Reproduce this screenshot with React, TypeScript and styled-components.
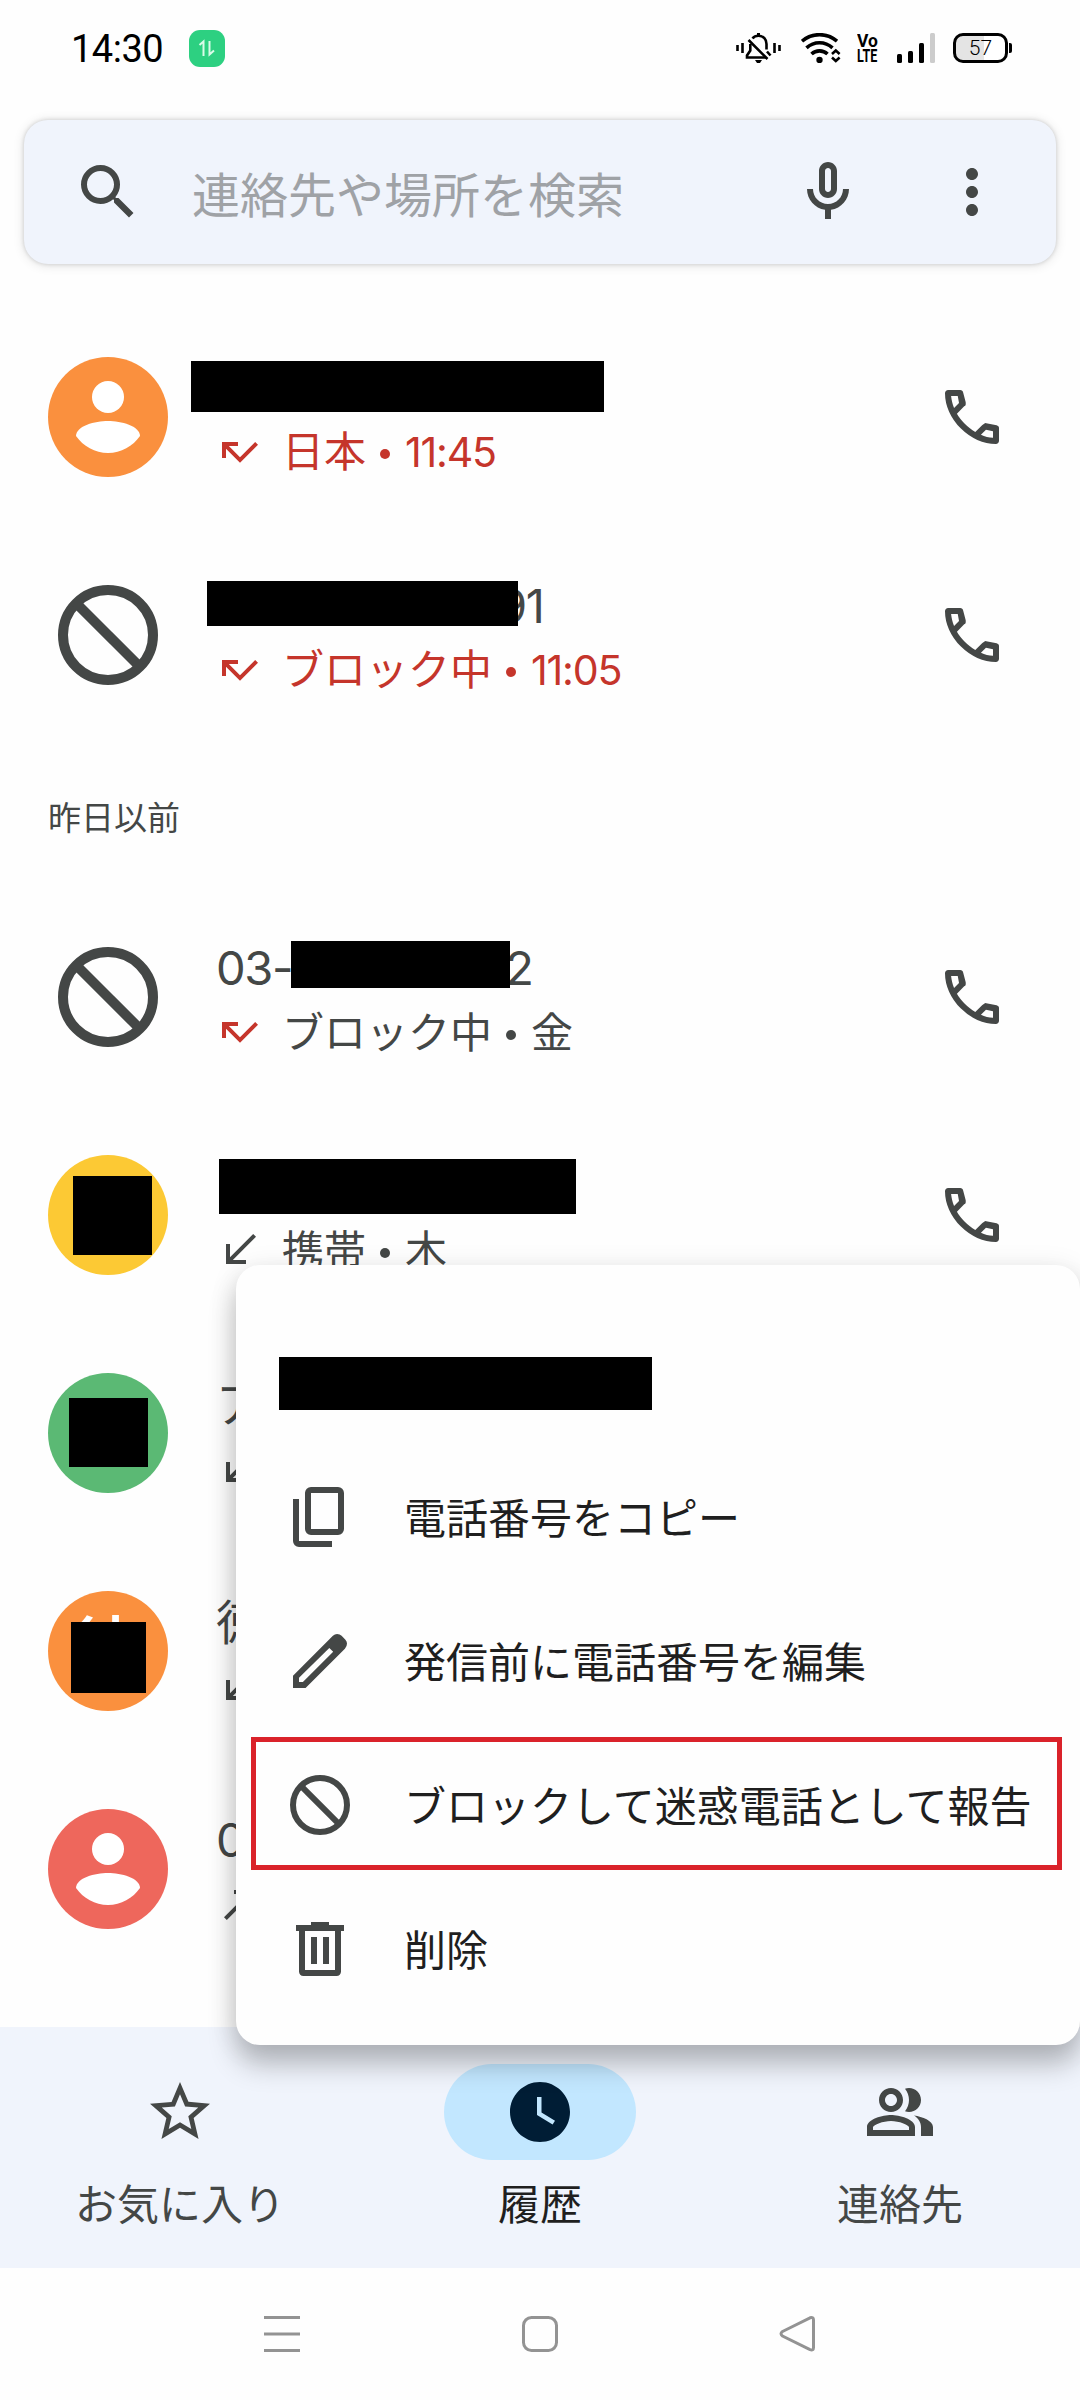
import React from "react";
import styled, { createGlobalStyle } from "styled-components";

const ink = "#444746";
const red = "#c5352b";
const surface = "#f0f4fc";

const GlobalStyle = createGlobalStyle`
  * { box-sizing: border-box; }
  body {
    margin: 0;
    background: #fff;
    color: ${ink};
    font-family: "Noto Sans CJK JP", "Noto Sans", sans-serif;
  }
`;

const Screen = styled.div`
  position: relative;
  display: flex;
  flex-direction: column;
  width: 1080px;
  height: 2400px;
  overflow: hidden;
  background: #fefefe;
`;

/* ---------- status bar ---------- */

const StatusBar = styled.header`
  display: flex;
  align-items: center;
  height: 96px;
  padding: 0 68px 0 71px;
  color: #000;
`;

const Clock = styled.span`
  width: 118px;
  padding-top: 1px;
  font: 400 38px/44px Roboto, sans-serif;
  letter-spacing: -0.5px;
`;

const DataBadge = styled.span`
  display: flex;
  width: 36px;
  height: 37px;
  border-radius: 11px;
  background: #2dd081;
`;

const StatusIcons = styled.div`
  display: flex;
  align-items: center;
  margin-left: auto;
  height: 30px;
`;

const StatusGlyph = styled.svg<{ $gap: number }>`
  display: block;
  flex: none;
  margin-right: ${(p) => p.$gap}px;
`;

const Volte = styled.span`
  display: flex;
  flex-direction: column;
  width: 22px;
  height: 30px;
  margin-right: 18px;
  font: 700 19px/15px Roboto, sans-serif;
`;

const VolteLine = styled.span<{ $stretch: number }>`
  display: block;
  width: max-content;
  height: 15px;
  transform: scaleX(${(p) => p.$stretch});
  transform-origin: left center;
`;

const Battery = styled.span`
  display: flex;
  align-items: center;
  justify-content: center;
  width: 55px;
  height: 30px;
  border: 3px solid #000;
  border-radius: 10px;
  background: linear-gradient(to right, #e4e4e4 58%, #fff 58%);
  font: 300 21px/24px Roboto, sans-serif;
`;

const BatteryTip = styled.span`
  width: 3px;
  height: 10px;
  margin: 0 0 0 1px;
  border-radius: 0 2px 2px 0;
  background: #000;
`;

/* ---------- search ---------- */

const SearchBar = styled.div`
  display: flex;
  align-items: center;
  height: 144px;
  margin: 24px 24px 44px;
  padding: 0 48px;
  border-radius: 24px;
  background: ${surface};
  box-shadow: 0 0 4px rgba(0, 0, 0, 0.16), 0 1px 12px rgba(0, 0, 0, 0.12);
`;

const SearchText = styled.span`
  flex: 1;
  margin-left: 48px;
  padding-bottom: 1px;
  color: #9fa2a6;
  font-size: 48px;
  line-height: 72px;
`;

const Icon = styled.svg<{ $size?: number }>`
  display: block;
  flex: none;
  width: ${(p) => p.$size ?? 72}px;
  height: ${(p) => p.$size ?? 72}px;
  fill: currentColor;
`;

const ActionGap = styled.span`
  width: 72px;
`;

/* ---------- call list ---------- */

const CallList = styled.main`
  display: flex;
  flex-direction: column;
  height: 1719px;
`;

const Row = styled.article`
  display: flex;
  align-items: center;
  flex: none;
  height: 218px;
  padding: 0 72px 0 48px;
`;

const Avatar = styled.div<{ $color?: string }>`
  display: flex;
  justify-content: center;
  align-items: flex-start;
  flex: none;
  width: 120px;
  height: 120px;
  margin-right: 48px;
  border-radius: 50%;
  background: ${(p) => p.$color ?? "transparent"};
`;

const Mask = styled.span<{ $w: number; $h: number; $top?: number; $left?: number }>`
  position: relative;
  z-index: 1;
  flex: none;
  align-self: flex-start;
  width: ${(p) => p.$w}px;
  height: ${(p) => p.$h}px;
  margin-top: ${(p) => p.$top ?? 0}px;
  margin-left: ${(p) => p.$left ?? 0}px;
  background: #000;
`;

const Initial = styled.span`
  width: 72px;
  margin: 8px -72px 0 0;
  color: #fff;
  font-size: 72px;
  font-weight: 500;
  line-height: 92px;
`;

const Details = styled.div`
  display: flex;
  flex: 1;
  flex-direction: column;
  gap: 4px;
  padding-top: 6px;
`;

const Name = styled.div<{ $lift?: number }>`
  display: flex;
  height: 60px;
  font-size: 48px;
  line-height: ${(p) => 60 - 2 * (p.$lift ?? 0)}px;
  white-space: nowrap;
`;

const Digits = styled.span<{ $shift?: number }>`
  margin-left: ${(p) => p.$shift ?? 0}px;
  font-family: Inter, sans-serif;
  font-size: 0.98em;
  letter-spacing: -0.03em;
`;

const Meta = styled.div<{ $alert?: boolean }>`
  display: flex;
  align-items: center;
  height: 60px;
  gap: 18px;
  color: ${(p) => (p.$alert ? red : ink)};
  font-size: 42px;
  line-height: 60px;
  white-space: pre;
`;

const MetaText = styled.span`
  padding-bottom: 4px;
`;

const Direction = styled(Icon)<{ $missed?: boolean }>`
  color: ${(p) => (p.$missed ? red : ink)};
`;

const Bullet = styled.span`
  display: inline-block;
  width: 10px;
  height: 10px;
  margin: 0 15px 8px 14px;
  border-radius: 50%;
  background: currentColor;
`;

const SectionTitle = styled.h2`
  flex: none;
  height: 144px;
  margin: 0;
  padding-left: 48px;
  font-size: 33px;
  font-weight: 400;
  line-height: 144px;
`;

/* ---------- context menu ---------- */

const Menu = styled.div`
  position: absolute;
  z-index: 3;
  top: 1265px;
  right: 0;
  display: flex;
  flex-direction: column;
  width: 844px;
  height: 780px;
  border-radius: 24px;
  background: #fefefe;
  color: #1f1f1f;
  box-shadow: 0 20px 28px rgba(0, 0, 0, 0.23), 0 4px 28px rgba(0, 0, 0, 0.1);
`;

const MenuHeader = styled.div`
  display: flex;
  height: 180px;
  padding: 92px 0 0 43px;
`;

const MenuItem = styled.div`
  position: relative;
  display: flex;
  align-items: center;
  height: 144px;
  padding-left: 48px;
  gap: 48px;
  font-size: 42px;
  line-height: 60px;
  white-space: nowrap;

  svg { color: ${ink}; }
`;

const MenuLabel = styled.span`
  padding-bottom: 3px;
`;

const Highlight = styled.span`
  position: absolute;
  top: 4px;
  left: 15px;
  width: 811px;
  height: 133px;
  border: 5px solid #da222a;
`;

/* ---------- bottom navigation ---------- */

const BottomNav = styled.nav`
  display: grid;
  grid-template-columns: repeat(3, 1fr);
  height: 241px;
  padding-top: 37px;
  background: ${surface};
`;

const Tab = styled.div<{ $active?: boolean }>`
  display: flex;
  flex-direction: column;
  align-items: center;
  gap: 12px;
  color: ${(p) => (p.$active ? "#1f1f1f" : ink)};
  font-size: 42px;
  line-height: 60px;
`;

const Pill = styled.span<{ $active?: boolean }>`
  display: flex;
  align-items: center;
  justify-content: center;
  width: 192px;
  height: 96px;
  border-radius: 48px;
  color: ${(p) => (p.$active ? "#001d35" : ink)};
  background: ${(p) => (p.$active ? "#c2e7ff" : "transparent")};
`;

const SystemNav = styled.footer`
  display: flex;
  align-items: center;
  justify-content: center;
  gap: 222px;
  height: 132px;
`;

const SystemIcon = styled.svg`
  width: 36px;
  height: 36px;
  overflow: visible;
  fill: none;
  stroke: #939393;
  stroke-width: 3;
`;

/* ---------- glyphs ---------- */

const paths = {
  search:
    "M15.5 14h-.79l-.28-.27A6.471 6.471 0 0 0 16 9.5 6.5 6.5 0 1 0 9.5 16c1.61 0 3.09-.59 4.23-1.57l.27.28v.79l5 4.99L20.49 19l-4.99-5zm-6 0C7.01 14 5 11.99 5 9.5S7.01 5 9.5 5 14 7.01 14 9.5 11.99 14 9.5 14z",
  mic: "M12 14c1.66 0 3-1.34 3-3V5c0-1.66-1.34-3-3-3S9 3.34 9 5v6c0 1.66 1.34 3 3 3zm-1-9c0-.55.45-1 1-1s1 .45 1 1v6c0 .55-.45 1-1 1s-1-.45-1-1V5zm6 6c0 2.76-2.24 5-5 5s-5-2.24-5-5H5c0 3.53 2.61 6.43 6 6.92V21h2v-3.08c3.39-.49 6-3.39 6-6.92h-2z",
  more: "M12 8c1.1 0 2-.9 2-2s-.9-2-2-2-2 .9-2 2 .9 2 2 2zm0 2c-1.1 0-2 .9-2 2s.9 2 2 2 2-.9 2-2-.9-2-2-2zm0 6c-1.1 0-2 .9-2 2s.9 2 2 2 2-.9 2-2-.9-2-2-2z",
  call: "M19.95 21Q16.825 21 13.775 19.637Q10.725 18.275 8.225 15.775Q5.725 13.275 4.363 10.225Q3 7.175 3 4.05Q3 3.6 3.3 3.3Q3.6 3 4.05 3H8.1Q8.45 3 8.725 3.237Q9 3.475 9.05 3.8L9.9 7.1Q9.95 7.7 9.875 7.975Q9.8 8.25 9.4 8.45L6.975 10.9Q7.475 11.825 8.162 12.688Q8.85 13.55 9.675 14.35Q10.45 15.125 11.3 15.787Q12.15 16.45 13.1 17L15.45 14.65Q15.675 14.425 16.038 14.212Q16.4 14 16.75 14.05L20.2 14.75Q20.55 14.85 20.775 15.112Q21 15.375 21 15.7V19.95Q21 20.4 20.7 20.7Q20.4 21 19.95 21ZM6.025 9L7.675 7.35L7.25 5H5.025Q5.15 6.025 5.375 7.025Q5.6 8.025 6.025 9ZM14.975 17.95Q15.95 18.375 16.962 18.625Q17.975 18.875 19 18.95V16.75L16.65 16.275Z",
  missed: "M19.59 7L12 14.59 6.41 9H11V7H3v8h2v-4.59l7 7 9-9z",
  received: "M20 5.41L18.59 4 7 15.59V9H5v10h10v-2H8.41z",
  made: "M9 5v2h6.59L4 18.59 5.41 20 17 8.41V15h2V5z",
  copy: "M9 18q-.825 0-1.413-.587Q7 16.825 7 16V4q0-.825.587-1.413Q8.175 2 9 2h9q.825 0 1.413.587Q20 3.175 20 4v12q0 .825-.587 1.413Q18.825 18 18 18Zm0-2h9V4H9v12Zm-4 6q-.825 0-1.413-.587Q3 20.825 3 20V6h2v14h11v2Z",
  edit: "M3 16.9V21H7.2L20.3 7.9Q21 7.2 21 6.2Q21 5.4 20.4 4.8L19.2 3.6Q18.6 3 17.7 3Q16.9 3 16.3 3.6ZM5 17.6V19H6.3L16.4 8.95L15.1 7.65Z",
  trash:
    "M9 3h6v1h5v2h-1v13.5c0 .9-.6 1.5-1.5 1.5h-11C5.6 21 5 20.4 5 19.5V6H4V4h5zM7 6v13h10V6zM9 8h2v9H9zM13 8h2v9h-2z",
  star: "M22 9.24l-7.19-.62L12 2 9.19 8.63 2 9.24l5.46 4.73L5.82 21 12 17.27 18.18 21l-1.63-7.03L22 9.24zM12 15.4l-3.76 2.27 1-4.28-3.32-2.88 4.38-.38L12 6.1l1.71 4.04 4.38.38-3.32 2.88 1 4.28L12 15.4z",
  history:
    "M12 2C6.5 2 2 6.5 2 12s4.5 10 10 10 10-4.5 10-10S17.5 2 12 2zm4.2 14.2L11 13V7h1.5v5.2l4.5 2.7-.8 1.3z",
  people:
    "M16.67 13.13C18.04 14.06 19 15.32 19 17v3h4v-3c0-2.18-3.57-3.47-6.33-3.87zM15 12c2.21 0 4-1.79 4-4s-1.79-4-4-4c-.47 0-.91.1-1.33.24C14.5 5.27 15 6.58 15 8s-.5 2.73-1.33 3.76c.42.14.86.24 1.33.24zM9 12c2.21 0 4-1.79 4-4s-1.79-4-4-4-4 1.79-4 4 1.79 4 4 4zm0-6c1.1 0 2 .9 2 2s-.9 2-2 2-2-.9-2-2 .9-2 2-2zM9 13c-2.67 0-8 1.34-8 4v3h16v-3c0-2.66-5.33-4-8-4zm6 5H3v-.99C3.2 16.29 6.3 15 9 15s5.8 1.29 6 2v1z",
};

const Glyph = ({ name }: { name: keyof typeof paths }) => (
  <Icon viewBox="0 0 24 24">
    <path fillRule="evenodd" d={paths[name]} />
  </Icon>
);

const CallDirection = ({ kind }: { kind: "missed" | "received" | "made" }) => (
  <Direction viewBox="0 0 24 24" $size={48} $missed={kind === "missed"}>
    <path d={paths[kind]} />
  </Direction>
);

const BlockIcon = ({ size = 72 }: { size?: number }) => (
  <Icon viewBox="0 0 24 24" $size={size}>
    <g fill="none" stroke="currentColor" strokeWidth="2">
      <circle cx="12" cy="12" r="9" />
      <path d="M5.64 5.64L18.36 18.36" />
    </g>
  </Icon>
);

const PersonIcon = () => (
  <Icon viewBox="0 0 120 120" $size={120}>
    <g fill="#fff">
      <circle cx="60" cy="40" r="16" />
      <path d="M28 79C28 69 47 64 60 64S92 69 92 79C85 89 73 96 60 96S35 89 28 79Z" />
    </g>
  </Icon>
);

const StatusGlyphs = () => (
  <StatusIcons>
    <StatusGlyph $gap={20} width="45" height="30" viewBox="0 0 45 30">
      <g fill="none" stroke="#000" strokeWidth="2.6">
        <path d="M1.5 12v6M6.5 10v10M38.5 10v10M43.5 12v6" />
        <path d="M16.5 5.5C18 3.5 20 2.8 22.5 2.8C27.5 2.8 30.5 6.5 30.5 11V16.5M14.3 11V17.5L11 22.5V24.5H30" />
        <path d="M12.5 7L31.5 26M31 18.5L34.5 22.5" />
      </g>
      <path d="M21 0h3v3h-3zM19 27h7l-2 3h-3z" />
    </StatusGlyph>
    <StatusGlyph $gap={16} width="40" height="30" viewBox="0 0 40 30">
      <g fill="none" stroke="#000" strokeWidth="3.6">
        <path d="M1 8.2C11-.5 26-.5 36 8.2" />
        <path d="M5.5 14.8C13 8 24 8 31.5 14.8" />
        <path d="M10.5 21C15 16.8 22 16.8 26.5 21" />
        <path strokeWidth="2.6" d="M31 21L34.8 17.5L38.6 21M31 24.5L34.8 28L38.6 24.5" />
      </g>
      <circle cx="18.5" cy="27" r="3.2" />
    </StatusGlyph>
    <Volte>
      <VolteLine $stretch={0.92}>Vo</VolteLine>
      <VolteLine $stretch={0.66}>LTE</VolteLine>
    </Volte>
    <StatusGlyph $gap={18} width="38" height="30" viewBox="0 0 38 30">
      <rect x="0" y="21" width="5" height="9" rx="1.5" />
      <rect x="11" y="18" width="5" height="12" rx="1.5" />
      <rect x="22" y="10" width="5" height="20" rx="1.5" />
      <rect x="33" y="0" width="5" height="30" rx="1.5" fill="#ccc" />
    </StatusGlyph>
    <Battery>57</Battery>
    <BatteryTip />
  </StatusIcons>
);

const CallButton = () => <Glyph name="call" />;

export default function App() {
  return (
    <Screen>
      <GlobalStyle />
      <StatusBar>
        <Clock>14:30</Clock>
        <DataBadge>
          <svg width="36" height="37" viewBox="0 0 36 37">
            <path d="M10.5 15L14.5 11.5V26M20.5 11V24.5L25 20.5" fill="none" stroke="#d9fbe8" strokeWidth="2" />
          </svg>
        </DataBadge>
        <StatusGlyphs />
      </StatusBar>

      <SearchBar>
        <Glyph name="search" />
        <SearchText>連絡先や場所を検索</SearchText>
        <Glyph name="mic" />
        <ActionGap />
        <Glyph name="more" />
      </SearchBar>

      <CallList>
        <Row>
          <Avatar $color="#fa903e"><PersonIcon /></Avatar>
          <Details>
            <Name><Mask $w={413} $h={51} $top={3} $left={-25} /></Name>
            <Meta $alert>
              <CallDirection kind="missed" />
              <MetaText>日本<Bullet /><Digits>11:45</Digits></MetaText>
            </Meta>
          </Details>
          <CallButton />
        </Row>
        <Row>
          <Avatar><BlockIcon size={120} /></Avatar>
          <Details>
            <Name>
              <Mask $w={311} $h={45} $top={5} $left={-9} />
              <Digits $shift={-20}>91</Digits>
            </Name>
            <Meta $alert>
              <CallDirection kind="missed" />
              <MetaText>ブロック中<Bullet /><Digits>11:05</Digits></MetaText>
            </Meta>
          </Details>
          <CallButton />
        </Row>

        <SectionTitle>昨日以前</SectionTitle>

        <Row>
          <Avatar><BlockIcon size={120} /></Avatar>
          <Details>
            <Name>
              <Digits>03-</Digits>
              <Mask $w={219} $h={47} $top={3} $left={-1} />
              <Digits $shift={-5}>2</Digits>
            </Name>
            <Meta>
              <CallDirection kind="missed" />
              <MetaText>ブロック中<Bullet />金</MetaText>
            </Meta>
          </Details>
          <CallButton />
        </Row>
        <Row>
          <Avatar $color="#fcc934"><Mask $w={79} $h={79} $top={21} $left={9} /></Avatar>
          <Details>
            <Name><Mask $w={357} $h={55} $top={3} $left={3} /></Name>
            <Meta>
              <CallDirection kind="received" />
              <MetaText>携帯<Bullet />木</MetaText>
            </Meta>
          </Details>
          <CallButton />
        </Row>
        <Row>
          <Avatar $color="#5bb974"><Mask $w={79} $h={69} $top={25} $left={1} /></Avatar>
          <Details>
            <Name $lift={3}>ア</Name>
            <Meta><CallDirection kind="received" /></Meta>
          </Details>
        </Row>
        <Row>
          <Avatar $color="#fa903e">
            <Initial>徳</Initial>
            <Mask $w={75} $h={71} $top={31} $left={1} />
          </Avatar>
          <Details>
            <Name $lift={3}>徳</Name>
            <Meta><CallDirection kind="received" /></Meta>
          </Details>
        </Row>
        <Row>
          <Avatar $color="#ee675c"><PersonIcon /></Avatar>
          <Details>
            <Name><Digits>0</Digits></Name>
            <Meta><CallDirection kind="made" /></Meta>
          </Details>
        </Row>
      </CallList>

      <BottomNav>
        <Tab>
          <Pill><Glyph name="star" /></Pill>
          お気に入り
        </Tab>
        <Tab $active>
          <Pill $active><Glyph name="history" /></Pill>
          履歴
        </Tab>
        <Tab>
          <Pill><Glyph name="people" /></Pill>
          連絡先
        </Tab>
      </BottomNav>

      <SystemNav>
        <SystemIcon viewBox="0 0 36 36">
          <path d="M0 1.5H36M0 18H36M0 34.5H36" />
        </SystemIcon>
        <SystemIcon viewBox="0 0 36 36">
          <rect x="1.5" y="1.5" width="33" height="33" rx="8" />
        </SystemIcon>
        <SystemIcon viewBox="0 0 36 36">
          <path d="M2.5 15.5L30 1.8Q33.5 .8 33.5 4V31.5Q33.5 35 30 33.7L2.5 20Q-.5 17.7 2.5 15.5Z" />
        </SystemIcon>
      </SystemNav>

      <Menu>
        <MenuHeader><Mask $w={373} $h={53} /></MenuHeader>
        <MenuItem><Glyph name="copy" /><MenuLabel>電話番号をコピー</MenuLabel></MenuItem>
        <MenuItem><Glyph name="edit" /><MenuLabel>発信前に電話番号を編集</MenuLabel></MenuItem>
        <MenuItem>
          <Highlight />
          <BlockIcon />
          <MenuLabel>ブロックして迷惑電話として報告</MenuLabel>
        </MenuItem>
        <MenuItem><Glyph name="trash" /><MenuLabel>削除</MenuLabel></MenuItem>
      </Menu>
    </Screen>
  );
}
